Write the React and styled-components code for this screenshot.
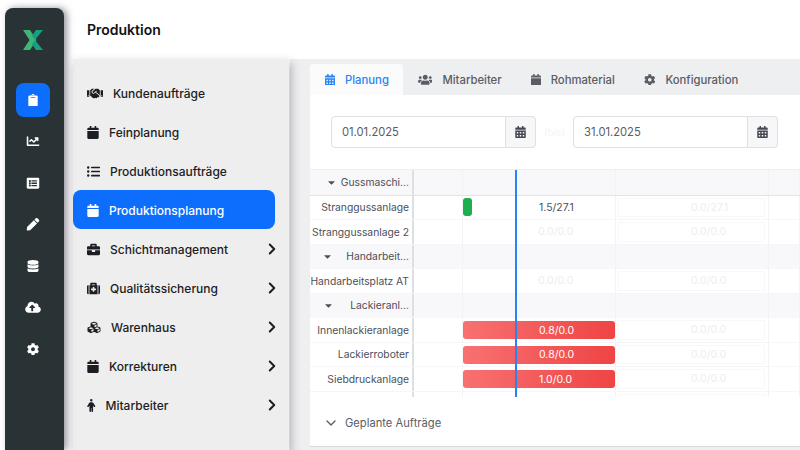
import React from 'react'
import styled, { createGlobalStyle } from 'styled-components'
import {
  FaClipboard, FaChartLine, FaListAlt, FaPen, FaDatabase, FaCloudUploadAlt, FaCog,
  FaHandshake, FaCalendar, FaListUl, FaCalendarAlt, FaBriefcase, FaMedkit, FaCubes,
  FaUsers, FaCaretDown,
} from 'react-icons/fa'
import { FaPerson } from 'react-icons/fa6'
import { ChevronDown, ChevronRight } from 'lucide-react'

const GlobalStyle = createGlobalStyle`
  html, body { margin: 0; padding: 0; height: 100%; background: #fff; overflow: hidden; }
  body { font-family: Inter, "Liberation Sans", sans-serif; color: #15171c; }
`

const Page = styled.div`
  display: flex;
  width: 800px;
  height: 450px;
  overflow: hidden;
`

const Rail = styled.aside`
  flex: 0 0 59px;
  box-sizing: border-box;
  margin: 8px 0 0 5px;
  padding-right: 3px;
  height: 442px;
  background: #293234;
  border-radius: 8px 8px 0 0;
  box-shadow: 3px 0 7px rgba(70, 60, 80, 0.55);
  display: flex;
  flex-direction: column;
  align-items: center;
  position: relative;
  z-index: 3;
`

const Logo = styled.svg`
  width: 20px;
  height: 20px;
  margin: 22px 0 33px;
  flex: none;
`

const RailButton = styled.div`
  width: 34px;
  height: 34px;
  margin-bottom: 7.5px;
  display: flex;
  align-items: center;
  justify-content: center;
  color: #fff;
  border-radius: 8px;
  background: ${({ $active }) => ($active ? '#0d6efd' : 'transparent')};

  svg {
    height: 12.5px;
    width: 16px;
  }
`

const Main = styled.div`
  flex: 1;
  min-width: 0;
  display: flex;
  flex-direction: column;
`

const Header = styled.header`
  flex: 0 0 59px;
  padding: 21px 0 0 23px;
  box-sizing: border-box;
  font-size: 14px;
  line-height: 17px;
  font-weight: 600;
  color: #101216;
`

const Body = styled.div`
  flex: 1;
  min-height: 0;
  display: flex;
  padding-left: 9px;
`

const Menu = styled.nav`
  flex: 0 0 216px;
  background: #eeeeef;
  padding-top: 14px;
  box-shadow: 2px 4px 9px rgba(70, 60, 80, 0.38);
  position: relative;
  z-index: 2;
`

const MenuItem = styled.div`
  width: 202px;
  height: 39px;
  box-sizing: border-box;
  padding: 1px 0 0 14px;
  display: flex;
  align-items: center;
  gap: 10px;
  font-size: 12px;
  font-weight: 500;
  border-radius: 8px;
  color: ${({ $active }) => ($active ? '#fff' : '#1b1d22')};
  background: ${({ $active }) => ($active ? '#0d6efd' : 'transparent')};

  > svg:first-child {
    height: 13px;
    width: ${({ $iconWidth }) => $iconWidth}px;
    flex: none;
  }
`

const MenuLabel = styled.span`
  flex: 1;
`

const MenuArrow = styled(ChevronRight)`
  flex: none;
  margin-right: -6px;
`

const Content = styled.main`
  flex: 1;
  min-width: 0;
  margin-left: 1px;
  padding: 0 0 3px 20px;
  display: flex;
  flex-direction: column;
  background: #eeeff1;
`

const Tabs = styled.div`
  flex: 0 0 36px;
  box-sizing: border-box;
  padding-top: 5px;
  display: flex;
`

const Tab = styled.div`
  padding: 0 14px 0 15px;
  display: flex;
  align-items: center;
  gap: 10px;
  font-size: 11.3px;
  font-weight: 500;
  border-radius: 3px 3px 0 0;
  color: ${({ $active }) => ($active ? '#2684f5' : '#5a5c66')};
  background: ${({ $active }) => ($active ? '#fbfbfc' : 'transparent')};

  svg {
    height: 11.5px;
    width: ${({ $iconWidth }) => $iconWidth}px;
  }
`

const Panel = styled.div`
  flex: 1;
  min-height: 0;
  display: flex;
  flex-direction: column;
  background: #fff;
`

const DateRow = styled.div`
  flex: 0 0 74px;
  box-sizing: border-box;
  padding: 21px 0 0 21px;
  display: flex;
  align-items: flex-start;
`

const DateGroup = styled.div`
  width: 205px;
  height: 32px;
  display: flex;
`

const DateField = styled.div`
  flex: 1;
  box-sizing: border-box;
  border: 1px solid #dfe0e4;
  border-radius: 4px 0 0 4px;
  padding-left: 10px;
  display: flex;
  align-items: center;
  font-size: 11.2px;
  color: #5a5c66;
`

const DateButton = styled.div`
  flex: 0 0 30px;
  box-sizing: border-box;
  border: 1px solid #dfe0e4;
  border-left: 0;
  border-radius: 0 4px 4px 0;
  background: #f7f7f9;
  display: flex;
  align-items: center;
  justify-content: center;
  color: #454852;

  svg {
    height: 12px;
    width: 11px;
  }
`

const Bis = styled.span`
  width: 37px;
  text-align: center;
  line-height: 32px;
  font-size: 10px;
  color: #f4f4f6;
`

const Gantt = styled.div`
  flex: 0 0 227px;
  position: relative;
  overflow: hidden;
  border-top: 1px solid #efeff1;
`

const NowLine = styled.div`
  position: absolute;
  left: 205px;
  top: 0;
  bottom: 0;
  width: 2px;
  background: #2684f5;
  z-index: 2;
`

const Row = styled.div`
  height: ${({ $first }) => ($first ? '25.5px' : '24.5px')};
  display: grid;
  grid-template-columns: 104px 49px 153px 153px 1fr;
  background: ${({ $group }) => ($group ? '#f8f8fa' : '#fff')};
  border-bottom: 1px solid ${({ $first }) => ($first ? '#e4e4e8' : '#f6f6f8')};
  box-sizing: border-box;
`

const RowLabel = styled.div`
  border-right: 2px solid #dedfe3;
  padding-right: 3px;
  display: flex;
  align-items: center;
  justify-content: flex-end;
  gap: ${({ $gap }) => $gap || 4}px;
  font-size: 10.3px;
  color: #4c4f5a;
  white-space: nowrap;
`

const Cell = styled.div`
  border-right: 1px solid #f3f3f5;
  padding: 2px 0;
  min-width: 0;
`

const RedBar = styled.div`
  height: 18px;
  width: 152px;
  margin-top: 1px;
  box-sizing: border-box;
  padding-left: 76px;
  display: flex;
  align-items: center;
  font-size: 10.5px;
  border-radius: 3px;
  color: #fff;
  background: linear-gradient(90deg, #f87171, #ef4444);
`

const GreenCell = styled.div`
  height: 100%;
  display: flex;
  align-items: center;
  gap: 67px;
  font-size: 10.5px;
  color: #4c4f5a;
`

const GreenBar = styled.div`
  flex: 0 0 9px;
  height: 18px;
  border-radius: 3px;
  background: #1fae4f;
`

const Faint = styled.div`
  height: 100%;
  margin: 0 3px 0 2px;
  box-sizing: border-box;
  border: 1px solid ${({ $plain }) => ($plain ? 'transparent' : '#f8f8f9')};
  padding-left: 72px;
  display: flex;
  align-items: center;
  font-size: 10.5px;
  color: #eeeef0;
`

const Footer = styled.div`
  flex: 1;
  box-sizing: border-box;
  padding: 3px 0 0 13px;
  display: flex;
  align-items: center;
  gap: 6px;
  font-size: 11.2px;
  color: #5a5c66;
  background: #fff;
  border-bottom: 1px solid #d9dade;
  position: relative;
  z-index: 3;
`

const railIcons = [FaChartLine, FaListAlt, FaPen, FaDatabase, FaCloudUploadAlt, FaCog]

const menu = [
  { Icon: FaHandshake, width: 16, label: 'Kundenaufträge' },
  { Icon: FaCalendar, width: 12, label: 'Feinplanung' },
  { Icon: FaListUl, width: 13, label: 'Produktionsaufträge' },
  { Icon: FaCalendar, width: 12, label: 'Produktionsplanung', active: true },
  { Icon: FaBriefcase, width: 13, label: 'Schichtmanagement', arrow: true },
  { Icon: FaMedkit, width: 13, label: 'Qualitätssicherung', arrow: true },
  { Icon: FaCubes, width: 14, label: 'Warenhaus', arrow: true },
  { Icon: FaCalendar, width: 12, label: 'Korrekturen', arrow: true },
  { Icon: FaPerson, width: 8.5, label: 'Mitarbeiter', arrow: true },
]

const tabs = [
  { Icon: FaCalendarAlt, width: 10, label: 'Planung', active: true },
  { Icon: FaUsers, width: 14.5, label: 'Mitarbeiter' },
  { Icon: FaCalendar, width: 10, label: 'Rohmaterial' },
  { Icon: FaCog, width: 11.5, label: 'Konfiguration' },
]

const rows = [
  { group: true, first: true, label: 'Gussmaschi...' },
  { label: 'Stranggussanlage', bar: 'green', text: '1.5/27.1', next: '0.0/27.1' },
  { label: 'Stranggussanlage 2', text: '0.0/0.0', next: '0.0/0.0' },
  { group: true, label: 'Handarbeit...', gap: 13 },
  { label: 'Handarbeitsplatz AT', text: '0.0/0.0', next: '0.0/0.0' },
  { group: true, label: 'Lackieranl...', gap: 16 },
  { label: 'Innenlackieranlage', bar: 'red', text: '0.8/0.0', next: '0.0/0.0' },
  { label: 'Lackierroboter', bar: 'red', text: '0.8/0.0', next: '0.0/0.0' },
  { label: 'Siebdruckanlage', bar: 'red', text: '1.0/0.0', next: '0.0/0.0' },
  { label: 'Lackierroboter 2', text: '0.0/0.0', next: '0.0/0.0' },
]

function GanttRow({ row }) {
  if (row.group) {
    return (
      <Row $group $first={row.first}>
        <RowLabel $gap={row.gap}><FaCaretDown size={11} />{row.label}</RowLabel>
        <Cell /><Cell /><Cell /><Cell />
      </Row>
    )
  }
  return (
    <Row>
      <RowLabel>{row.label}</RowLabel>
      <Cell />
      <Cell>
        {!row.bar && <Faint $plain>{row.text}</Faint>}
        {row.bar === 'red' && <RedBar>{row.text}</RedBar>}
        {row.bar === 'green' && (
          <GreenCell>
            <GreenBar />
            {row.text}
          </GreenCell>
        )}
      </Cell>
      <Cell><Faint>{row.next}</Faint></Cell>
      <Cell />
    </Row>
  )
}

export default function App() {
  return (
    <Page>
      <GlobalStyle />
      <Rail>
        <Logo viewBox="0 0 20 20">
          <path d="M0 0h7l6.5 10L7 20H0l6.5-10z" fill="#3fb577" />
          <path d="M20 0h-7L9 6l3 4z" fill="#14a085" />
          <path d="M20 20h-7l-4-6 3-4z" fill="#14a085" />
        </Logo>
        <RailButton $active><FaClipboard /></RailButton>
        {railIcons.map((Icon, i) => (
          <RailButton key={i}><Icon /></RailButton>
        ))}
      </Rail>
      <Main>
        <Header>Produktion</Header>
        <Body>
          <Menu>
            {menu.map(({ Icon, width, label, active, arrow }) => (
              <MenuItem key={label} $active={active} $iconWidth={width}>
                <Icon />
                <MenuLabel>{label}</MenuLabel>
                {arrow && <MenuArrow size={18} strokeWidth={2.6} />}
              </MenuItem>
            ))}
          </Menu>
          <Content>
            <Tabs>
              {tabs.map(({ Icon, width, label, active }) => (
                <Tab key={label} $active={active} $iconWidth={width}><Icon />{label}</Tab>
              ))}
            </Tabs>
            <Panel>
              <DateRow>
                <DateGroup>
                  <DateField>01.01.2025</DateField>
                  <DateButton><FaCalendarAlt /></DateButton>
                </DateGroup>
                <Bis>(bis)</Bis>
                <DateGroup>
                  <DateField>31.01.2025</DateField>
                  <DateButton><FaCalendarAlt /></DateButton>
                </DateGroup>
              </DateRow>
              <Gantt>
                <NowLine />
                {rows.map((row, i) => <GanttRow key={i} row={row} />)}
              </Gantt>
              <Footer><ChevronDown size={16} />Geplante Aufträge</Footer>
            </Panel>
          </Content>
        </Body>
      </Main>
    </Page>
  )
}
